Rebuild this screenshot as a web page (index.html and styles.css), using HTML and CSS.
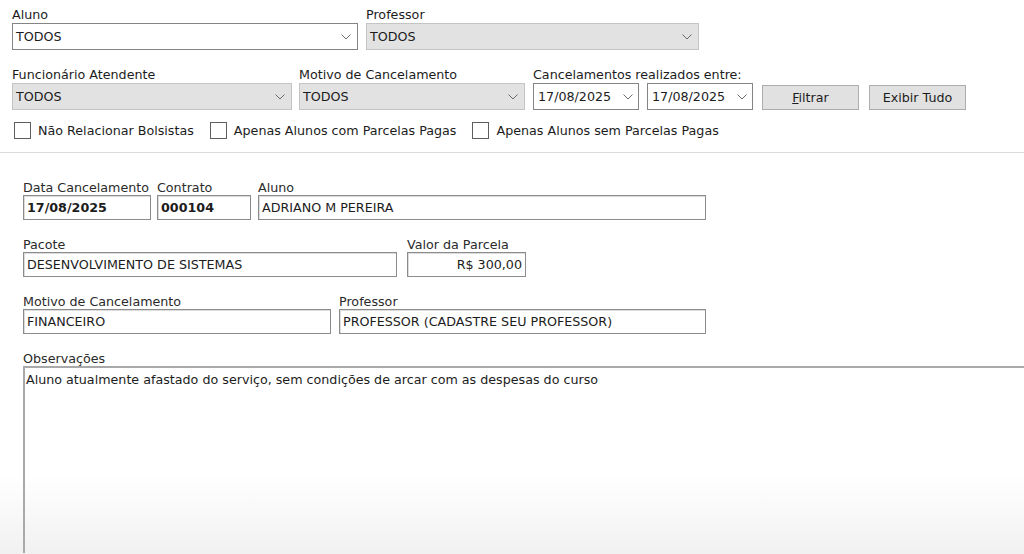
FILE: index.html
```html
<!DOCTYPE html>
<html lang="pt-BR">
<head>
<meta charset="UTF-8">
<title>Cancelamentos</title>
<link rel="stylesheet" href="styles.css">
</head>
<body>

<!-- Filtros da consulta -->
<section class="filters">
    <div class="row row-top">
        <div class="field w-aluno">
            <label>Aluno</label>
            <div class="combo"><span>TODOS</span><svg width="10" height="6" viewBox="0 0 10 6"><path d="M0.5 0.5l4.5 4.5 4.5-4.5" /></svg></div>
        </div>
        <div class="field w-prof">
            <label>Professor</label>
            <div class="combo off"><span>TODOS</span><svg width="10" height="6" viewBox="0 0 10 6"><path d="M0.5 0.5l4.5 4.5 4.5-4.5" /></svg></div>
        </div>
    </div>

    <div class="row row-mid">
        <div class="field w-func">
            <label>Funcionário Atendente</label>
            <div class="combo off"><span>TODOS</span><svg width="10" height="6" viewBox="0 0 10 6"><path d="M0.5 0.5l4.5 4.5 4.5-4.5" /></svg></div>
        </div>
        <div class="field w-motivo">
            <label>Motivo de Cancelamento</label>
            <div class="combo off"><span>TODOS</span><svg width="10" height="6" viewBox="0 0 10 6"><path d="M0.5 0.5l4.5 4.5 4.5-4.5" /></svg></div>
        </div>
        <div class="field w-periodo">
            <label>Cancelamentos realizados entre:</label>
            <div class="dates">
                <div class="combo date"><span>17/08/2025</span><svg width="10" height="6" viewBox="0 0 10 6"><path d="M0.5 0.5l4.5 4.5 4.5-4.5" /></svg></div>
                <div class="combo date"><span>17/08/2025</span><svg width="10" height="6" viewBox="0 0 10 6"><path d="M0.5 0.5l4.5 4.5 4.5-4.5" /></svg></div>
            </div>
        </div>
        <button class="btn btn-filtrar"><u>F</u>iltrar</button>
        <button class="btn btn-tudo">Exibir Tudo</button>
    </div>

    <div class="checks">
        <div class="check"><span class="box"></span>Não Relacionar Bolsistas</div>
        <div class="check"><span class="box"></span>Apenas Alunos com Parcelas Pagas</div>
        <div class="check"><span class="box"></span>Apenas Alunos sem Parcelas Pagas</div>
    </div>
</section>

<!-- Detalhe do cancelamento selecionado -->
<section class="detail">
    <div class="drow">
        <div class="dfield w-data">
            <label>Data Cancelamento</label>
            <div class="box-text bold">17/08/2025</div>
        </div>
        <div class="dfield w-contrato">
            <label>Contrato</label>
            <div class="box-text bold">000104</div>
        </div>
        <div class="dfield w-nome">
            <label>Aluno</label>
            <div class="box-text">ADRIANO M PEREIRA</div>
        </div>
    </div>

    <div class="drow">
        <div class="dfield w-pacote">
            <label>Pacote</label>
            <div class="box-text">DESENVOLVIMENTO DE SISTEMAS</div>
        </div>
        <div class="dfield w-valor">
            <label>Valor da Parcela</label>
            <div class="box-text right">R$ 300,00</div>
        </div>
    </div>

    <div class="drow">
        <div class="dfield w-motivo2">
            <label>Motivo de Cancelamento</label>
            <div class="box-text">FINANCEIRO</div>
        </div>
        <div class="dfield w-prof2">
            <label>Professor</label>
            <div class="box-text">PROFESSOR (CADASTRE SEU PROFESSOR)</div>
        </div>
    </div>

    <div class="drow last">
        <div class="dfield w-obs">
            <label>Observações</label>
            <div class="memo">Aluno atualmente afastado do serviço, sem condições de arcar com as despesas do curso</div>
        </div>
    </div>
</section>

</body>
</html>
```

FILE: styles.css
```css
* {
    box-sizing: border-box;
}
html, body {
    margin: 0;
    height: 100%;
}
body {
    font-family: "DejaVu Sans", Verdana, sans-serif;
    font-size: 12.7px;
    color: #1c1c1c;
    background: linear-gradient(to bottom, #fff 0, #fff 475px, #f1f1f1 554px);
    overflow: hidden;
}

/* ---- filtros ---- */
.filters {
    height: 152px;
    padding: 7px 0 0 12px;
}
.row {
    display: flex;
    align-items: flex-end;
}
.row-mid {
    margin-top: 17px;
}
.field label {
    display: block;
    height: 16px;
    line-height: 16px;
    white-space: nowrap;
}
.combo {
    height: 27px;
    border: 1px solid #848484;
    background: #fff;
    display: flex;
    align-items: center;
    justify-content: space-between;
    padding: 0 6px 0 3px;
}
.combo svg path {
    fill: none;
    stroke: #6b6b6b;
    stroke-width: 1;
}
.combo.off {
    background: #e2e2e2;
    border-color: #c4c4c4;
}
.combo.date {
    width: 106px;
    padding: 0 5px 0 4px;
}
.dates {
    display: flex;
    gap: 8px;
}
.w-aluno { width: 346px; }
.w-prof { width: 333px; margin-left: 8px; }
.w-func { width: 280px; }
.w-motivo { width: 226px; margin-left: 7px; }
.w-periodo { width: 220px; margin-left: 8px; }

.btn {
    height: 25px;
    width: 97px;
    border: 1px solid #adadad;
    background: #e1e1e1;
    font-family: inherit;
    font-size: 12.7px;
    color: #1c1c1c;
    padding: 0;
}
.btn-filtrar { margin-left: 9px; }
.btn-tudo { margin-left: 10px; }

.checks {
    display: flex;
    align-items: center;
    margin-top: 12px;
    padding-left: 2px;
    gap: 16px;
}
.check {
    display: flex;
    align-items: center;
    gap: 7px;
    white-space: nowrap;
}
.check .box {
    width: 17px;
    height: 17px;
    border: 1px solid #5e5e5e;
    background: #fff;
}

/* ---- detalhe ---- */
.detail {
    border-top: 1px solid #dadada;
    padding: 27px 0 0 23px;
}
.drow {
    display: flex;
    margin-bottom: 17px;
}
.drow.last {
    margin-bottom: 0;
}
.dfield label {
    display: block;
    height: 15px;
    line-height: 15px;
    color: #2a2a2a;
    white-space: nowrap;
}
.box-text {
    height: 25px;
    line-height: 23px;
    border: 1px solid #8c8c8c;
    box-shadow: inset 1px 1px 0 #dcdcdc;
    background: #fff;
    padding: 0 3px;
    white-space: nowrap;
    overflow: hidden;
}
.box-text.bold {
    font-weight: bold;
    padding-left: 3px;
}
.box-text.right {
    text-align: right;
}
.w-data { width: 128px; }
.w-contrato { width: 94px; margin-left: 6px; }
.w-nome { width: 448px; margin-left: 7px; }
.w-pacote { width: 374px; }
.w-valor { width: 119px; margin-left: 10px; }
.w-motivo2 { width: 308px; }
.w-prof2 { width: 367px; margin-left: 8px; }
.w-obs { flex: 1; }

/* memo sem borda direita: continua além da janela */
.memo {
    height: 187px;
    border-top: 2px solid #a9a9a9;
    border-left: 2px solid #a9a9a9;
    padding: 5px 1px;
    line-height: 14px;
}
```
